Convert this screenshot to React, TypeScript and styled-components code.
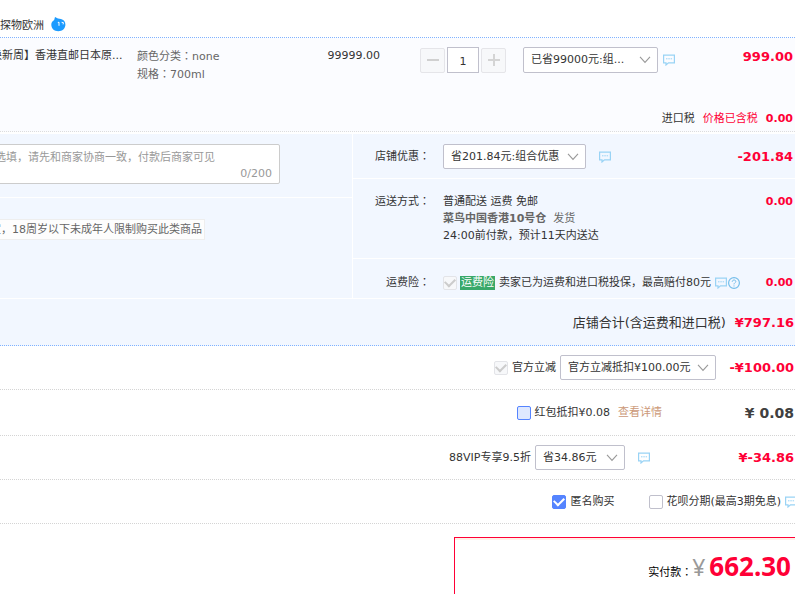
import React from "react";
import styled, { createGlobalStyle } from "styled-components";

const GlobalStyle = createGlobalStyle`
  * { box-sizing: border-box; }
  body {
    margin: 0;
    background: #fff;
    color: #333;
    font: 11px/18px "DejaVu Sans", "Noto Sans CJK SC", sans-serif;
    overflow: hidden;
  }
  button, input, select, textarea { font: inherit; color: inherit; margin: 0; }
  svg { flex: none; }
`;

const RED = "#ff0036";

const Page = styled.main`
  display: flex;
  flex-direction: column;
  min-height: 100vh;
  white-space: nowrap;
`;

const ShopHeader = styled.header`
  display: flex;
  align-items: flex-end;
  gap: 7px;
  height: 38px;
  padding-bottom: 2px;
  border-bottom: 1px dotted #80b2ff;
`;

const ShopIcon = styled.svg`
  display: block;
  margin-bottom: 3px;
`;

const Item = styled.section`
  background: #fbfcff;
  border-bottom: 1px dotted #ddd;
  padding: 9px 2px 3px 0;
`;

const ItemRow = styled.div`
  display: grid;
  grid-template-columns: 123px 140px 117px 86px 1fr auto;
  align-items: start;
  min-height: 63px;
`;

const ItemTitle = styled.div`
  margin-left: -9px;
`;

const ItemProps = styled.div`
  padding: 1px 0 0 14px;
  color: #666;
`;

const Colon = styled.span`
  font-family: "Noto Sans CJK TC", sans-serif;
  line-height: 1;
`;

const UnitPrice = styled.div`
  text-align: right;
`;

const Quantity = styled.div`
  display: grid;
  grid-template-columns: 25px 32px 25px;
  gap: 2px;
  align-items: end;
  height: 26px;
  margin-left: 40px;
`;

const StepButton = styled.button`
  display: flex;
  align-items: center;
  justify-content: center;
  height: 25px;
  padding: 0;
  border: 1px solid #e5e5e9;
  border-radius: 2px;
  background: #f7f8fa;
`;

const QuantityInput = styled.input`
  width: 32px;
  height: 26px;
  padding: 2px 0 0;
  border: 1px solid #c0c0cc;
  background: #fff;
  text-align: center;
`;

const Promo = styled.div`
  display: flex;
  align-items: center;
  gap: 5px;
  margin-left: 57px;
`;

const Amount = styled.strong<{ $size?: number; $color?: string; $width?: number }>`
  font-size: ${(p) => p.$size ?? 13}px;
  color: ${(p) => p.$color ?? RED};
  min-width: ${(p) => p.$width ?? 0}px;
  text-align: right;
`;

const ItemAmount = styled(Amount)`
  margin-top: 1px;
`;

const TaxRow = styled.div`
  display: flex;
  justify-content: flex-end;
  gap: 8px;
`;

const RedText = styled.span`
  color: ${RED};
`;

const SelectFrame = styled.span<{ $width: number; $tall?: boolean }>`
  display: grid;
  align-items: center;
  width: ${(p) => p.$width}px;
  height: ${(p) => (p.$tall ? 26 : 25)}px;

  & > * { grid-area: 1 / 1; }
  & > svg { justify-self: end; margin-right: 7px; pointer-events: none; }
`;

const NativeSelect = styled.select`
  appearance: none;
  width: 100%;
  height: 100%;
  padding: 0 20px 0 7px;
  border: 1px solid #c0c0cc;
  border-radius: 2px;
  background: #fff;
`;

const Details = styled.section`
  display: grid;
  grid-template-columns: 352px 1fr;
  margin-top: 2px;
  background: #f2f7ff;
  border-bottom: 1px solid #fff;
`;

const Side = styled.div`
  display: flex;
  flex-direction: column;
  align-items: flex-start;
`;

const MessagePanel = styled.div`
  width: 100%;
  height: 64px;
  padding-top: 10px;
  border-bottom: 1px solid #fff;
`;

const MessageBox = styled.label`
  display: flex;
  flex-direction: column;
  width: 290px;
  height: 40px;
  margin-left: -10px;
  padding: 4px 7px 1px 0;
  border: 1px solid #ccc;
  border-radius: 2px;
  background: #fff;
`;

const MessageInput = styled.textarea`
  height: 18px;
  padding: 0 0 0 4px;
  border: 0;
  resize: none;
  overflow: hidden;
  background: transparent;
  &::placeholder { color: #999; opacity: 1; }
`;

const Counter = styled.span`
  align-self: flex-end;
  line-height: 16px;
  color: #999;
`;

const Notice = styled.p`
  margin: 21px 0 0 -12px;
  padding: 1px 2px 0 1px;
  border: 1px solid #eee;
  background: #fdfdfd;
  color: #666;
`;

const Options = styled.div`
  border-left: 1px solid #fff;
`;

const OptionRow = styled.div<{ $height: number; $top?: boolean }>`
  display: flex;
  align-items: ${(p) => (p.$top ? "flex-start" : "center")};
  min-height: ${(p) => p.$height}px;
  padding: ${(p) => (p.$top ? "14px 2px 0 0" : "1px 2px 0 0")};
  & + & { border-top: 1px solid #fff; }
`;

const InsuranceRow = styled(OptionRow)`
  padding-top: 8px;
`;

const OptionLabel = styled.span`
  width: 77px;
  margin-right: 13px;
  text-align: right;
`;

const OptionBody = styled.div<{ $gap?: number }>`
  display: flex;
  flex: 1;
  align-items: center;
  gap: ${(p) => p.$gap ?? 0}px;
`;

const Delivery = styled.div`
  flex: 1;
  line-height: 17px;
`;

const Warehouse = styled.strong`
  margin-right: 7px;
  color: #666;
`;

const Muted = styled.span`
  color: #666;
`;

const Badge = styled.span`
  padding: 0 1px;
  margin: 0 4px 0 3px;
  background: #39a869;
  color: #fff;
  line-height: 14px;
`;

const IconGroup = styled.span`
  display: flex;
  gap: 1px;
  margin-left: 4px;
`;

const ShopTotal = styled.section`
  display: flex;
  align-items: center;
  justify-content: flex-end;
  gap: 9px;
  height: 47px;
  padding: 1px 1px 0 0;
  background: #f2f7ff;
  border-bottom: 1px dotted #80b2ff;
  font-size: 13px;
`;

const SummaryRow = styled.section<{ $height: number }>`
  display: flex;
  align-items: center;
  justify-content: flex-end;
  gap: 4px;
  height: ${(p) => p.$height}px;
  padding-right: 1px;
  border-bottom: 1px dotted #d4d4d4;
`;

const CheckLabel = styled.label<{ $gap?: number }>`
  display: flex;
  align-items: center;
  gap: ${(p) => p.$gap ?? 3}px;
`;

const Checkbox = styled.input<{ $tint?: boolean }>`
  appearance: none;
  display: grid;
  place-items: center;
  flex: none;
  width: 14px;
  height: 14px;
  border: 1px solid ${(p) => (p.$tint ? "#5584ff" : "#c0c0cc")};
  border-radius: 2px;
  background: ${(p) => (p.$tint ? "#dee8ff" : "#fff")};

  &:checked { border-color: #5584ff; background: #5584ff; }
  &:disabled { border-color: #e3e4e8; background: #f7f8fa; }
  &:checked::after {
    content: "";
    width: 8px;
    height: 5px;
    margin-bottom: 2px;
    border: solid #fff;
    border-width: 0 0 2px 2px;
    transform: rotate(-45deg);
  }
  &:disabled::after { border-color: #ccc; }
`;

const DetailLink = styled.a`
  margin-left: 4px;
  color: #cc9978;
  text-decoration: none;
`;

const TipSlot = styled.span`
  display: flex;
  margin-left: 9px;
`;

const PlanTip = styled.span`
  display: flex;
  width: 9px;
`;

const Plan = styled(CheckLabel)`
  margin-left: 31px;
`;

const PayBox = styled.section`
  flex: 1;
  align-self: flex-end;
  display: flex;
  align-items: flex-start;
  justify-content: flex-end;
  width: 341px;
  margin-top: 13px;
  padding: 14px 4px 0 0;
  border: solid ${RED};
  border-width: 1px 0 0 1px;
  box-shadow: inset 0 2px 0 #fff0e8;
`;

const PayLine = styled.div`
  display: flex;
  align-items: baseline;
  line-height: 28px;
`;

const PayLabel = styled.span`
  color: #000;
`;

const PayCurrency = styled.span`
  margin-right: 4px;
  color: #999;
  font-family: "Noto Sans", sans-serif;
  font-size: 23px;
`;

const PayAmount = styled.strong`
  color: ${RED};
  font-family: "Noto Sans", sans-serif;
  font-size: 26px;
`;

const Chevron = () => (
  <svg width="12" height="8" viewBox="0 0 12 8" fill="none" stroke="#999" aria-hidden="true">
    <path d="M1 .8 6 6.400 11 .8" strokeWidth="1.1" />
  </svg>
);

const TipIcon = () => (
  <svg width="12" height="12" viewBox="0 0 12 12" fill="none" stroke="#99d3f5" aria-hidden="true">
    <path d="M.6 1.100h10.800v7.800H5.500L3 11V8.900H.6z" strokeWidth="1.200" />
    <path d="M3 4.800h1.500M5.300 4.800h1.500M7.600 4.800h1.500" />
  </svg>
);

const HelpIcon = () => (
  <svg width="12" height="12" viewBox="0 0 12 12" fill="none" stroke="#74bdea" aria-hidden="true">
    <circle cx="6" cy="6" r="5.400" strokeWidth="1.200" />
    <path d="M4.200 4.800c0-2.400 3.700-2.300 3.600-.2C7.700 5.800 6 5.900 6 7.400M6 8.400v1.100" />
  </svg>
);

function Select({ width, label, value, tall }: { width: number; label: string; value: string; tall?: boolean }) {
  return (
    <SelectFrame $width={width} $tall={tall}>
      <NativeSelect aria-label={label}>
        <option>{value}</option>
      </NativeSelect>
      <Chevron />
    </SelectFrame>
  );
}

export default function App() {
  return (
    <Page>
      <GlobalStyle />
      <ShopHeader>
        <span>探物欧洲</span>
        <ShopIcon width="15" height="15" viewBox="0 0 15 15" aria-hidden="true">
          <path d="M4 0 7 1.600c2.200.3 3.500.6 5.800 1.900C14 4.800 14.400 6.200 14.400 7.800c0 3.800-3.100 6.400-7.100 6.400S.3 11.600.3 7.800c0-2.200 1-3.700 2.900-4.900z" fill="#1c9bff" />
          <path d="M6.800 5.600l1.200-.4v3.600M10.600 5.300l1.800.3-.3 1.800" fill="none" stroke="#fff" />
        </ShopIcon>
      </ShopHeader>

      <Item>
        <ItemRow>
          <ItemTitle>焕新周】香港直邮日本原...</ItemTitle>
          <ItemProps>
            <div>颜色分类<Colon>：</Colon>none</div>
            <div>规格<Colon>：</Colon>700ml</div>
          </ItemProps>
          <UnitPrice>99999.00</UnitPrice>
          <Quantity>
            <StepButton type="button" aria-label="减少">
              <svg width="13" height="13" viewBox="0 0 13 13" stroke="#d0d0d0" strokeWidth="2">
                <path d="M1 6h12" />
              </svg>
            </StepButton>
            <QuantityInput aria-label="数量" defaultValue="1" />
            <StepButton type="button" aria-label="增加">
              <svg width="13" height="13" viewBox="0 0 13 13" stroke="#d4d4d4" strokeWidth="2">
                <path d="M1 6h12M7 0v12" />
              </svg>
            </StepButton>
          </Quantity>
          <Promo>
            <Select width={135} label="商品优惠" value="已省99000元:组..." tall />
            <TipIcon />
          </Promo>
          <ItemAmount>999.00</ItemAmount>
        </ItemRow>
        <TaxRow>
          <span>进口税</span>
          <RedText>价格已含税</RedText>
          <Amount $size={11}>0.00</Amount>
        </TaxRow>
      </Item>

      <Details>
        <Side>
          <MessagePanel>
            <MessageBox>
              <MessageInput aria-label="给卖家留言" placeholder="选填，请先和商家协商一致，付款后商家可见" />
              <Counter>0/200</Counter>
            </MessageBox>
          </MessagePanel>
          <Notice>定，18周岁以下未成年人限制购买此类商品</Notice>
        </Side>
        <Options>
          <OptionRow $height={44}>
            <OptionLabel>店铺优惠<Colon>：</Colon></OptionLabel>
            <OptionBody $gap={13}>
              <Select width={143} label="店铺优惠" value="省201.84元:组合优惠" />
              <TipIcon />
            </OptionBody>
            <Amount>-201.84</Amount>
          </OptionRow>
          <OptionRow $height={80} $top>
            <OptionLabel>运送方式<Colon>：</Colon></OptionLabel>
            <Delivery>
              <div>普通配送 运费 免邮</div>
              <div>
                <Warehouse>菜鸟中国香港10号仓</Warehouse>
                <Muted>发货</Muted>
              </div>
              <div>24:00前付款，预计11天内送达</div>
            </Delivery>
            <Amount $size={11}>0.00</Amount>
          </OptionRow>
          <InsuranceRow $height={40}>
            <OptionLabel>运费险<Colon>：</Colon></OptionLabel>
            <OptionBody>
              <Checkbox id="insurance" type="checkbox" defaultChecked disabled />
              <Badge>运费险</Badge>
              <label htmlFor="insurance">卖家已为运费和进口税投保，最高赔付80元</label>
              <IconGroup>
                <TipIcon />
                <HelpIcon />
              </IconGroup>
            </OptionBody>
            <Amount $size={11}>0.00</Amount>
          </InsuranceRow>
        </Options>
      </Details>

      <ShopTotal>
        <span>店铺合计(含运费和进口税)</span>
        <Amount>¥797.16</Amount>
      </ShopTotal>

      <SummaryRow $height={44}>
        <CheckLabel $gap={4}>
          <Checkbox type="checkbox" defaultChecked disabled />
          官方立减
        </CheckLabel>
        <Select width={156} label="官方立减" value="官方立减抵扣¥100.00元" />
        <Amount $width={74}>-¥100.00</Amount>
      </SummaryRow>

      <SummaryRow $height={46}>
        <CheckLabel $gap={4}>
          <Checkbox type="checkbox" $tint />
          红包抵扣¥0.08
        </CheckLabel>
        <DetailLink href="#detail">查看详情</DetailLink>
        <Amount $size={14} $color="#404040" $width={128}>¥ 0.08</Amount>
      </SummaryRow>

      <SummaryRow $height={44}>
        <span>88VIP专享9.5折</span>
        <Select width={90} label="88VIP专享9.5折" value="省34.86元" />
        <TipSlot>
          <TipIcon />
        </TipSlot>
        <Amount $width={140}>¥-34.86</Amount>
      </SummaryRow>

      <SummaryRow $height={44}>
        <CheckLabel $gap={4}>
          <Checkbox type="checkbox" defaultChecked />
          匿名购买
        </CheckLabel>
        <Plan>
          <Checkbox type="checkbox" />
          花呗分期(最高3期免息)
        </Plan>
        <PlanTip>
          <TipIcon />
        </PlanTip>
      </SummaryRow>

      <PayBox>
        <PayLine>
          <PayLabel>实付款<Colon>：</Colon></PayLabel>
          <PayCurrency>¥</PayCurrency>
          <PayAmount>662.30</PayAmount>
        </PayLine>
      </PayBox>
    </Page>
  );
}
